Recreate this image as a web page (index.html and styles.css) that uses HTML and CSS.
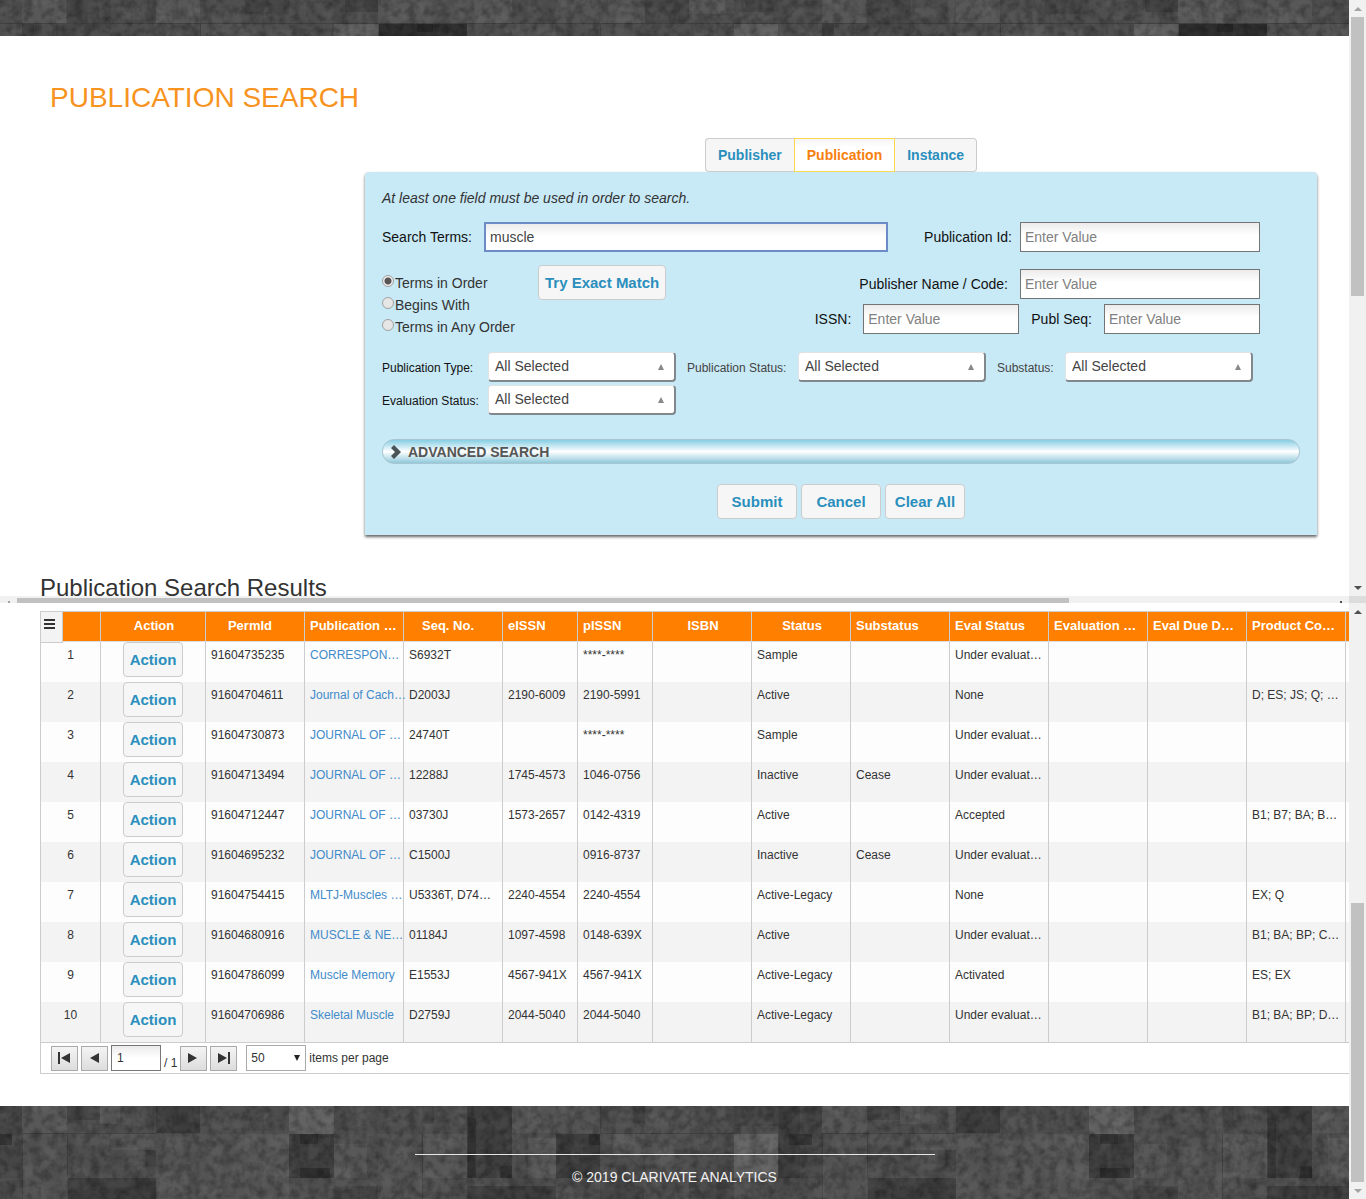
FILE: index.html
```html
<!DOCTYPE html>
<html lang="en">
<head>
<meta charset="utf-8">
<title>Publication Search</title>
<link rel="stylesheet" href="styles.css">
</head>
<body>
<div class="pane">
  <div class="view">
    <header class="banner">
      <svg class="texture" aria-hidden="true">
        <defs>
          <filter id="soften" x="0" y="0" width="100%" height="100%"><feGaussianBlur stdDeviation="1.200"/></filter>
          <filter id="grain" x="0" y="0" width="100%" height="100%">
            <feTurbulence type="fractalNoise" baseFrequency=".12" numOctaves="3" seed="4"/>
            <feColorMatrix values="0 0 0 0 0  0 0 0 0 0  0 0 0 0 0  1 0 0 0 -.38"/>
          </filter>
          <pattern id="mottle" width="264" height="92" patternUnits="userSpaceOnUse">
            <g fill="#fff" fill-opacity=".035" filter="url(#soften)">
              <path d="M0 6h11v11H0zM33 0h22v8H33zM58 12h9v16h-9zM88 2h14v20H88zM122 8h22v11h-22zM156 0h11v23h-11zM190 4h11v14h-11zM212 12h33v11h-33zM6 30h22v11H6zM44 36h11v22H44zM77 28h33v11H77zM128 40h16v24h-16zM166 32h22v11h-22zM210 34h11v33h-11zM234 28h22v16h-22zM0 60h33v11H0zM66 62h22v22H66zM100 70h33v11h-33zM155 66h33v20h-33zM200 78h22v11h-22zM232 60h11v22h-11zM22 80h22v12H22z"/>
            </g>
            <g fill="#000" fill-opacity=".06" filter="url(#soften)">
              <path d="M14 2h10v14H14zM70 0h11v18H70zM106 10h11v10h-11zM146 2h6v20h-6zM172 12h14v8h-14zM204 0h6v16h-6zM248 4h11v11h-11zM30 28h9v22h-9zM60 40h14v9H60zM112 30h11v22h-11zM146 44h15v14h-15zM192 46h14v10h-14zM224 40h6v22h-6zM40 62h22v10H40zM90 56h8v26h-8zM136 72h14v14h-14zM188 68h11v22h-11zM246 70h16v14h-16zM4 76h12v12H4z"/>
            </g>
          </pattern>
          <pattern id="stone-top" width="800" height="36" patternUnits="userSpaceOnUse">
            <rect width="800" height="36" fill="#4f4f4f"/>
            <path fill="#585858" d="M22 0h44v23H22zM156 0h44v23h-44zM378 0h45v23h-45zM467 0h45v23h-45zM600 0h45v23h-45zM689 0h45v14h-45z"/>
            <path fill="#545454" d="M200 23h44v13h-44zM423 0h44v23h-44zM512 23h44v13h-44zM556 0h44v23h-44z"/>
            <path fill="#484848" d="M67 0h44v23H67zM245 0h44v14h-44zM345 0h33v12h-33zM56 23h55v13H56zM645 0h44v23h-44zM745 0h33v12h-33z"/>
            <path fill="#414141" d="M22 23h12v13H22zM345 0h33v12h-33z"/>
            <path fill="#5f5f5f" d="M334 23h44v13h-44zM734 23h44v13h-44z"/>
            <path fill="#303030" d="M379 23h88v13h-88z"/>
            <path fill="#262626" d="M417 23h16v9h-16z"/>
            <path stroke="#424242" d="M0 23.500h800M200.500 23v13M600.500 23v13" fill="none"/>
          </pattern>
        </defs>
        <rect width="100%" height="100%" fill="url(#stone-top)"/>
        <rect width="100%" height="100%" fill="url(#mottle)"/>
        <rect width="100%" height="100%" filter="url(#grain)" opacity=".6"/>
      </svg>
    </header>

    <h1 class="title">PUBLICATION SEARCH</h1>

    <main class="search">
      <nav class="tabs">
        <button type="button" class="tab">Publisher</button>
        <button type="button" class="tab tab-active">Publication</button>
        <button type="button" class="tab">Instance</button>
      </nav>

      <form class="panel">
        <p class="hint">At least one field must be used in order to search.</p>

        <div class="line line-main">
          <label class="label-terms" for="terms">Search Terms:</label>
          <input class="field field-focus" id="terms" type="text" value="muscle">
          <label class="label-id" for="pubid">Publication Id:</label>
          <input class="field field-wide" id="pubid" type="text" placeholder="Enter Value">
        </div>

        <div class="line line-options">
          <div class="radios">
            <label class="radio"><input type="radio" name="mode" checked>Terms in Order</label>
            <label class="radio"><input type="radio" name="mode">Begins With</label>
            <label class="radio"><input type="radio" name="mode">Terms in Any Order</label>
          </div>
          <button type="button" class="btn">Try Exact Match</button>
          <div class="codes">
            <div class="code-line">
              <label for="pubname">Publisher Name / Code:</label>
              <input class="field field-wide" id="pubname" type="text" placeholder="Enter Value">
            </div>
            <div class="code-line">
              <label for="issn">ISSN:</label>
              <input class="field field-short" id="issn" type="text" placeholder="Enter Value">
              <label for="seq">Publ Seq:</label>
              <input class="field field-short" id="seq" type="text" placeholder="Enter Value">
            </div>
          </div>
        </div>

        <div class="filters">
          <label for="ptype">Publication Type:</label>
          <div class="drop"><select id="ptype"><option>All Selected</option></select></div>
          <label class="soft" for="pstatus">Publication Status:</label>
          <div class="drop"><select id="pstatus"><option>All Selected</option></select></div>
          <label class="soft" for="substatus">Substatus:</label>
          <div class="drop"><select id="substatus"><option>All Selected</option></select></div>
          <label for="estatus">Evaluation Status:</label>
          <div class="drop"><select id="estatus"><option>All Selected</option></select></div>
        </div>

        <button type="button" class="advanced">
          <svg width="12" height="14" viewBox="0 0 12 14" aria-hidden="true"><path d="M1 3l3-3 7 7-7 7-3-3 4-4z" fill="#4a5358"/></svg>
          ADVANCED SEARCH
        </button>

        <div class="actions">
          <button type="submit" class="btn">Submit</button>
          <button type="button" class="btn">Cancel</button>
          <button type="button" class="btn">Clear All</button>
        </div>
      </form>
    </main>

    <h2 class="results-title">Publication Search Results</h2>
  </div>
  <div class="vbar" aria-hidden="true">
    <span class="arrow arrow-up arrow-off"></span><span class="vthumb"></span><span class="space"></span><span class="arrow arrow-down"></span>
  </div>
</div>

<div class="hbar" aria-hidden="true">
  <div class="htrack"><span class="tick tick-off"></span><span class="hrail"><span class="hthumb"></span></span><span class="tick"></span></div>
  <span class="corner"></span>
</div>

<div class="pane">
  <div class="view">
    <section class="grid">
      <button type="button" class="menu" aria-label="Grid menu">
        <svg width="11" height="10" viewBox="0 0 11 10"><path d="M0 1h11M0 5h11M0 9h11" stroke="#333" stroke-width="2"/></svg>
      </button>
      <table>
        <colgroup>
          <col class="c60"><col class="c105"><col class="c99"><col class="c99"><col class="c99"><col class="c75"><col class="c75"><col class="c99"><col class="c99"><col class="c99"><col class="c99"><col class="c99"><col class="c99"><col class="c99"><col>
        </colgroup>
        <thead>
          <tr><th></th><th class="mid">Action</th><th class="mid shift">PermId</th><th>Publication …</th><th class="mid shift">Seq. No.</th><th>eISSN</th><th>pISSN</th><th class="mid">ISBN</th><th class="mid">Status</th><th>Substatus</th><th>Eval Status</th><th>Evaluation …</th><th>Eval Due D…</th><th>Product Co…</th><th></th></tr>
        </thead>
        <tbody>
          <tr><td>1</td><td><button type="button" class="btn btn-row">Action</button></td><td>91604735235</td><td><a href="#">CORRESPON…</a></td><td>S6932T</td><td></td><td>****-****</td><td></td><td>Sample</td><td></td><td>Under evaluat…</td><td></td><td></td><td></td><td></td></tr>
          <tr><td>2</td><td><button type="button" class="btn btn-row">Action</button></td><td>91604704611</td><td><a href="#">Journal of Cach…</a></td><td>D2003J</td><td>2190-6009</td><td>2190-5991</td><td></td><td>Active</td><td></td><td>None</td><td></td><td></td><td>D; ES; JS; Q; …</td><td></td></tr>
          <tr><td>3</td><td><button type="button" class="btn btn-row">Action</button></td><td>91604730873</td><td><a href="#">JOURNAL OF …</a></td><td>24740T</td><td></td><td>****-****</td><td></td><td>Sample</td><td></td><td>Under evaluat…</td><td></td><td></td><td></td><td></td></tr>
          <tr><td>4</td><td><button type="button" class="btn btn-row">Action</button></td><td>91604713494</td><td><a href="#">JOURNAL OF …</a></td><td>12288J</td><td>1745-4573</td><td>1046-0756</td><td></td><td>Inactive</td><td>Cease</td><td>Under evaluat…</td><td></td><td></td><td></td><td></td></tr>
          <tr><td>5</td><td><button type="button" class="btn btn-row">Action</button></td><td>91604712447</td><td><a href="#">JOURNAL OF …</a></td><td>03730J</td><td>1573-2657</td><td>0142-4319</td><td></td><td>Active</td><td></td><td>Accepted</td><td></td><td></td><td>B1; B7; BA; B…</td><td></td></tr>
          <tr><td>6</td><td><button type="button" class="btn btn-row">Action</button></td><td>91604695232</td><td><a href="#">JOURNAL OF …</a></td><td>C1500J</td><td></td><td>0916-8737</td><td></td><td>Inactive</td><td>Cease</td><td>Under evaluat…</td><td></td><td></td><td></td><td></td></tr>
          <tr><td>7</td><td><button type="button" class="btn btn-row">Action</button></td><td>91604754415</td><td><a href="#">MLTJ-Muscles …</a></td><td>U5336T, D74…</td><td>2240-4554</td><td>2240-4554</td><td></td><td>Active-Legacy</td><td></td><td>None</td><td></td><td></td><td>EX; Q</td><td></td></tr>
          <tr><td>8</td><td><button type="button" class="btn btn-row">Action</button></td><td>91604680916</td><td><a href="#">MUSCLE &amp; NE…</a></td><td>01184J</td><td>1097-4598</td><td>0148-639X</td><td></td><td>Active</td><td></td><td>Under evaluat…</td><td></td><td></td><td>B1; BA; BP; C…</td><td></td></tr>
          <tr><td>9</td><td><button type="button" class="btn btn-row">Action</button></td><td>91604786099</td><td><a href="#">Muscle Memory</a></td><td>E1553J</td><td>4567-941X</td><td>4567-941X</td><td></td><td>Active-Legacy</td><td></td><td>Activated</td><td></td><td></td><td>ES; EX</td><td></td></tr>
          <tr><td>10</td><td><button type="button" class="btn btn-row">Action</button></td><td>91604706986</td><td><a href="#">Skeletal Muscle</a></td><td>D2759J</td><td>2044-5040</td><td>2044-5040</td><td></td><td>Active-Legacy</td><td></td><td>Under evaluat…</td><td></td><td></td><td>B1; BA; BP; D…</td><td></td></tr>
        </tbody>
      </table>
      <div class="pager">
        <button type="button" class="page-btn" aria-label="First page"><svg width="13" height="12" viewBox="0 0 13 12"><path d="M0 0h2v12H0zM12 1v10L3 6z" fill="#333"/></svg></button>
        <button type="button" class="page-btn" aria-label="Previous page"><svg width="13" height="12" viewBox="0 0 13 12"><path d="M11 1v10L2 6z" fill="#333"/></svg></button>
        <input class="page-input" type="text" value="1" aria-label="Page">
        <span class="page-total">/ 1</span>
        <button type="button" class="page-btn" aria-label="Next page"><svg width="13" height="12" viewBox="0 0 13 12"><path d="M1 1v10l9-5z" fill="#333"/></svg></button>
        <button type="button" class="page-btn page-last" aria-label="Last page"><svg width="13" height="12" viewBox="0 0 13 12"><path d="M1 1v10l9-5zM11 0h2v12h-2z" fill="#333"/></svg></button>
        <div class="size"><select id="size"><option>50</option></select></div>
        <label for="size">items per page</label>
      </div>
    </section>

    <footer class="footer">
      <svg class="texture" aria-hidden="true">
        <defs>
          <pattern id="stone-bottom" width="800" height="93" patternUnits="userSpaceOnUse">
            <rect width="800" height="93" fill="#4f4f4f"/>
            <path fill="#464646" d="M0 0h22v72H0zM67 0h44v14H67zM145 42h18v18h-18zM200 60h12v14h-12zM422 0h12v18h-12zM600 72h44v21h-44zM633 0h12v17h-12zM689 72h45v21h-45zM734 0h44v20h-44zM333 80h45v13h-45z"/>
            <path fill="#585858" d="M22 0h45v27H22zM100 0h20v18h-20zM111 28h45v16h-45zM245 28h44v65h-44zM334 38h33v34h-33zM423 28h44v44h-44zM512 0h44v27h-44zM528 32h28v40h-28zM613 28h76v22h-76z"/>
            <path fill="#545454" d="M22 28h45v65H22zM156 28h89v65h-89zM378 28h45v65h-45zM556 0h44v27h-44zM645 0h44v72h-44z"/>
            <path fill="#3e3e3e" d="M156 0h44v27h-44zM68 72h88v21H68zM467 0h45v72h-45zM556 28h44v44h-44zM778 0h22v72h-22zM467 80h89v13h-89z"/>
            <path fill="#626262" d="M289 0h45v28h-45zM734 28h44v44h-44z"/>
            <path fill="#404040" d="M289 28h45v44h-45z"/>
            <path fill="#323232" d="M0 28h12v11H0zM300 28h18v10h-18zM300 62h30v10h-30zM468 12h8v60h-8zM500 60h12v12h-12zM589 28h11v11h-11zM789 28h11v11h-11z"/>
            <path stroke="#444" d="M22.500 28v65M67.500 28v44M22 27.500h134M422.500 28v65M600.500 0v28M778.500 0v72M600 27.500h134" fill="none"/>
          </pattern>
        </defs>
        <rect width="100%" height="100%" fill="url(#stone-bottom)"/>
        <rect width="100%" height="100%" fill="url(#mottle)"/>
        <rect width="100%" height="100%" filter="url(#grain)" opacity=".6"/>
      </svg>
      <hr class="rule">
      <p class="copyright">© 2019 CLARIVATE ANALYTICS</p>
    </footer>
  </div>
  <div class="vbar" aria-hidden="true">
    <span class="arrow arrow-up"></span><span class="space"></span><span class="vthumb"></span><span class="arrow arrow-down arrow-off"></span>
  </div>
</div>
</body>
</html>
```

FILE: styles.css
```css
* {
  box-sizing: border-box;
}

body {
  margin: 0;
  background: #fff;
  color: #333;
  font: 14px/20px "Liberation Sans", Arial, sans-serif;
}

button,
input,
select {
  margin: 0;
  font: inherit;
  color: inherit;
}

/* Panes and their scroll bars */

.pane {
  display: grid;
  grid-template-columns: minmax(0, 1fr) 17px;
}

.view {
  min-width: 0;
}

.vbar {
  display: flex;
  flex-direction: column;
  align-items: center;
  background: #f1f1f1;
}

.vthumb {
  width: 13px;
  height: 279px;
  background: #c1c1c1;
}

.space {
  flex: 1;
}

.arrow {
  display: flex;
  align-items: center;
  justify-content: center;
  height: 17px;
}

.arrow::before {
  content: "";
  border: 4px solid transparent;
}

.arrow-up::before {
  border-top: 0;
  border-bottom-color: #505050;
}

.arrow-down::before {
  border-bottom: 0;
  border-top-color: #505050;
}

.arrow-up.arrow-off::before {
  border-bottom-color: #a3a3a3;
}

.arrow-down.arrow-off::before {
  border-top-color: #a3a3a3;
}

.hbar {
  display: flex;
  height: 7px;
}

.htrack {
  display: flex;
  flex: 1;
  align-items: flex-end;
  background: #f1f1f1;
}

.hrail {
  flex: 1;
}

.hthumb {
  display: block;
  width: 80%;
  height: 5px;
  background: #c1c1c1;
}

.tick {
  width: 17px;
  height: 2px;
  border: solid transparent;
  border-width: 0 7px 0 8px;
  background: #505050 padding-box;
}

.tick-off {
  background-color: #a3a3a3;
}

.corner {
  width: 17px;
  background: #dcdcdc;
}

/* Banner and title */

.banner {
  position: relative;
  height: 36px;
}

.texture {
  position: absolute;
  inset: 0;
  width: 100%;
  height: 100%;
}

.title {
  margin: 46px 0 24px 50px;
  color: #f7931e;
  font-size: 28px;
  font-weight: 400;
  line-height: 32px;
}

.results-title {
  height: 22px;
  margin: 39px 0 0 40px;
  font-size: 24px;
  font-weight: 400;
  line-height: 28px;
}

/* Search form */

.search {
  margin: 0 32px 0 365px;
}

.tabs {
  display: flex;
  justify-content: center;
}

.tab {
  height: 34px;
  padding: 0 12px;
  border: 1px solid #ccc;
  background: #f6f6f6;
  color: #2a8fbd;
  font-weight: 700;
}

.tab:first-child {
  border-right: 0;
  border-radius: 4px 0 0 4px;
}

.tab:last-child {
  border-left: 0;
  border-radius: 0 4px 4px 0;
}

.tab-active {
  border-color: #fbd850;
  background: linear-gradient(#f4f4f4, #fff 8px);
  color: #f77f0e;
}

.panel {
  padding: 16px 17px;
  border-radius: 4px 4px 0 0;
  background: #c8e9f6;
  box-shadow: 0 2px 3px #666;
}

.hint {
  margin: 0 0 14px;
  font-style: italic;
}

.line {
  display: flex;
  margin-right: 40px;
  color: #111;
}

.line-main {
  align-items: center;
}

.label-terms {
  width: 102px;
}

.label-id {
  margin: 0 8px 0 36px;
}

.field {
  height: 30px;
  padding: 0 4px;
  border: 1px solid #747474;
  border-radius: 0;
  background: linear-gradient(#ebebeb, #fff 12px);
  color: #444;
}

.field::placeholder {
  color: #808080;
  opacity: 1;
}

.field-focus {
  flex: 1;
  min-width: 0;
  border: 2px solid #6c8cc8;
}

.field-wide {
  width: 240px;
}

.field-short {
  width: 156px;
}

.line-options {
  align-items: flex-start;
  margin-top: 13px;
}

.radios {
  width: 156px;
  padding-top: 7px;
  color: #333;
}

.radio {
  display: flex;
  align-items: flex-start;
  line-height: 22px;
}

.radio input {
  appearance: none;
  width: 12px;
  height: 12px;
  margin: 3px 1px 0 0;
  border: 1px solid #a0a0a0;
  border-radius: 50%;
  background: #e6e6e6;
}

.radio input:checked {
  background: radial-gradient(circle, #5a5555 3px, #eee 4px);
}

.btn {
  min-width: 80px;
  height: 35px;
  padding: 0 6px;
  border: 1px solid #ccc;
  border-radius: 4px;
  background: #f6f6f6;
  color: #2a8fbd;
  font-size: 15px;
  font-weight: 700;
  white-space: nowrap;
}

.codes {
  display: flex;
  flex: 1;
  flex-direction: column;
  align-items: flex-end;
  gap: 5px;
  padding-top: 4px;
}

.code-line {
  display: flex;
  align-items: center;
  gap: 12px;
}

.filters {
  display: grid;
  grid-template-columns: 95px 188px 100px 188px 57px 188px;
  gap: 3px 11px;
  align-items: center;
  margin-top: 14px;
  font-size: 12px;
  color: #111;
  white-space: nowrap;
}

.filters label {
  padding-top: 2px;
}

.filters .soft {
  color: #444;
}

.drop,
.size {
  position: relative;
}

.drop select {
  appearance: none;
  display: block;
  width: 100%;
  height: 30px;
  padding: 0 24px 2px 6px;
  border: 1px solid #e2e2e2;
  border-right: 2px solid #80888c;
  border-bottom: 2px solid #80888c;
  border-radius: 4px;
  background: #fff;
  color: #444;
  font-size: 14px;
}

.drop::after {
  content: "";
  position: absolute;
  top: 12px;
  right: 12px;
  border: 3px solid transparent;
  border-top: 0;
  border-bottom: 6px solid #888;
  pointer-events: none;
}

.advanced {
  display: flex;
  align-items: center;
  gap: 6px;
  width: 100%;
  height: 25px;
  margin: 24px 0 20px;
  padding: 0 7px;
  border: 1px solid #a9c6d0;
  border-radius: 12px;
  background: linear-gradient(#87cee3, #fff 50%, #8fc9db);
  color: #555;
  font-weight: 700;
}

.actions {
  display: flex;
  justify-content: center;
  gap: 4px;
}

/* Results grid */

.grid {
  position: relative;
  margin: 8px 0 32px 40px;
  border: solid #ccc;
  border-width: 1px 0 1px 1px;
}

.menu {
  position: absolute;
  top: 0;
  left: 0;
  width: 22px;
  height: 31px;
  padding: 0 4px 6px 0;
  border: solid #ccc;
  border-width: 0 1px 1px 0;
  background: #f3f3f3;
}

table {
  width: 100%;
  table-layout: fixed;
  border-collapse: separate;
  border-spacing: 0;
  font-size: 12px;
}

.c60 { width: 60px; }
.c75 { width: 75px; }
.c99 { width: 99px; }
.c105 { width: 105px; }

th,
td {
  padding: 0 0 0 5px;
  border-right: 1px solid #ccc;
  text-align: left;
  white-space: nowrap;
}

th:last-child,
td:last-child {
  padding: 0;
  border-right: 0;
}

th {
  height: 30px;
  padding-bottom: 2px;
  border-bottom: 1px solid #ddd;
  background: #ff8000;
  color: #fff;
  font-size: 13px;
}

th.mid {
  padding-left: 2px;
  text-align: center;
}

th.shift {
  padding-right: 12px;
}

td {
  height: 40px;
  padding-top: 3px;
  line-height: 20px;
  vertical-align: top;
}

td:nth-child(-n+2) {
  padding-left: 0;
  text-align: center;
}

td:nth-child(2) {
  padding-top: 0;
}

tbody tr {
  background: #fdfdfd;
}

tbody tr:nth-child(even) {
  background: #f3f3f3;
}

.btn-row {
  display: block;
  min-width: 60px;
  margin: 0 auto;
  padding: 0;
}

td a {
  color: #428bca;
  text-decoration: none;
}

.pager {
  display: flex;
  align-items: center;
  gap: 3px;
  height: 31px;
  padding-left: 10px;
  border-top: 1px solid #ccc;
  font-size: 12px;
}

.page-btn {
  display: flex;
  align-items: center;
  justify-content: center;
  width: 27px;
  height: 25px;
  padding: 0;
  border: 1px solid #aaa;
  background: linear-gradient(#f4f4f4, #ddd);
}

.page-input {
  width: 50px;
  height: 26px;
  padding: 0 5px;
  border: 1px solid #777;
  background: linear-gradient(#ebebeb, #fff 12px);
}

.page-total {
  padding-top: 10px;
}

.page-last {
  margin-right: 6px;
}

.size select {
  appearance: none;
  display: block;
  width: 60px;
  height: 26px;
  padding: 0 4px;
  border: 1px solid #aaa;
  background: #fff;
}

.size::after {
  content: "";
  position: absolute;
  top: 10px;
  right: 6px;
  border: 3px solid transparent;
  border-top: 6px solid #222;
  border-bottom: 0;
  pointer-events: none;
}

/* Footer */

.footer {
  position: relative;
  padding: 48px 0 12px;
  color: #f2f2f2;
  text-align: center;
}

.rule {
  position: relative;
  width: 520px;
  max-width: 100%;
  height: 1px;
  margin: 0 auto 12px;
  border: 0;
  background: #e6e6e6;
}

.copyright {
  position: relative;
  margin: 0;
}
```
